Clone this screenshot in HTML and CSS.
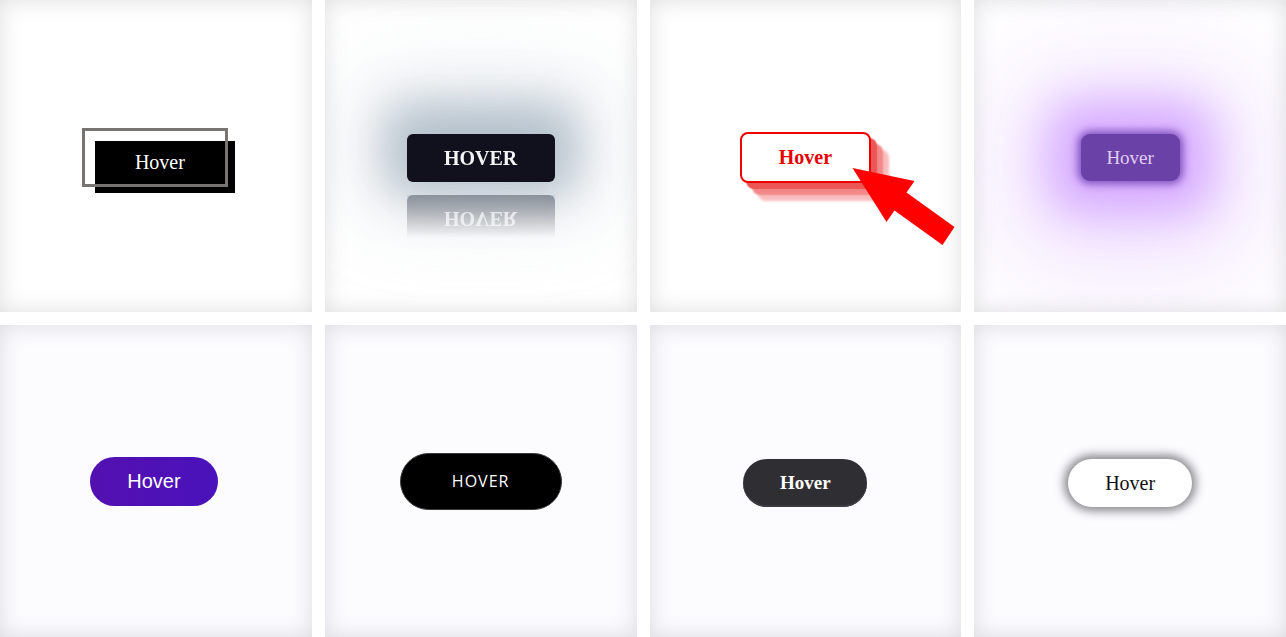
FILE: index.html
```html
<!DOCTYPE html>
<html lang="en">
<head>
<meta charset="utf-8">
<title>Hover buttons</title>
<link rel="stylesheet" href="styles.css">
</head>
<body>
<main class="grid">
  <div class="card">
    <button class="btn b1"><span class="b1-text">Hover</span></button>
  </div>
  <div class="card">
    <button class="btn b2">HOVER</button>
  </div>
  <div class="card">
    <button class="btn b3">Hover</button>
    <svg class="pointer" viewBox="0 0 311.75 312" aria-hidden="true">
      <polygon points="202.5,168 264.5,181 256.5,192.5 304.5,227 292.5,245 244.5,210.5 236.5,222" fill="#ff0000"/>
    </svg>
  </div>
  <div class="card">
    <button class="btn b4">Hover</button>
  </div>
  <div class="card card-low">
    <button class="btn b5">Hover</button>
  </div>
  <div class="card card-low">
    <button class="btn b6">HOVER</button>
  </div>
  <div class="card card-low">
    <button class="btn b7">Hover</button>
  </div>
  <div class="card card-low">
    <button class="btn b8">Hover</button>
  </div>
</main>
</body>
</html>
```
FILE: styles.css
```css
*, *::before, *::after { box-sizing: border-box; }

html, body {
  margin: 0;
  padding: 0;
  background: #ffffff;
}

.grid {
  display: grid;
  grid-template-columns: repeat(4, 1fr);
  grid-template-rows: 312px 312px;
  gap: 13px;
  width: 1286px;
  height: 637px;
}

.card {
  position: relative;
  display: flex;
  align-items: center;
  justify-content: center;
  background: #ffffff;
  box-shadow: inset 0 0 22px rgba(60, 60, 70, 0.17);
  overflow: hidden;
}

.card-low {
  background: #fcfbfe;
}

.btn {
  margin: 0;
  padding: 0;
  border: none;
  outline: none;
  font-family: "Liberation Serif", "Times New Roman", serif;
  cursor: pointer;
  display: flex;
  align-items: center;
  justify-content: center;
}

/* 1: offset outline */
.b1 {
  position: relative;
  width: 140px;
  height: 52px;
  margin: 12px 0 0 8px;
  background: transparent;
  color: #ffffff;
  font-size: 20px;
}
.b1::before {
  content: "";
  position: absolute;
  left: 5px;
  top: 5px;
  width: 140px;
  height: 52px;
  background: #000000;
}
.b1::after {
  content: "";
  position: absolute;
  left: -8px;
  top: -8px;
  width: 146px;
  height: 59px;
  border: 3px solid #777471;
}
.b1-text {
  position: relative;
  z-index: 1;
}

/* 2: reflection + glow */
.b2 {
  width: 148px;
  height: 48px;
  margin-top: 4px;
  border-radius: 6px;
  background: #10111c;
  color: #f4f4f4;
  font-size: 20px;
  font-weight: bold;
  box-shadow: 0 -8px 45px 22px rgba(135, 155, 172, 0.55), 0 -12px 85px 40px rgba(175, 190, 202, 0.3);
  -webkit-box-reflect: below 13px linear-gradient(transparent 10%, rgba(0, 0, 0, 0.5));
}

/* 3: 3d red */
.b3 {
  width: 131px;
  height: 51px;
  margin-top: 3px;
  border: 2px solid #ee0000;
  border-radius: 8px;
  background: #ffffff;
  color: #e60000;
  font-size: 20px;
  font-weight: bold;
  box-shadow: 6px 6px 1px #ec5656, 12px 12px 2px #f28888, 18px 18px 3px #f8bcbc;
}

.pointer {
  position: absolute;
  left: 0;
  top: 0;
  width: 100%;
  height: 100%;
  pointer-events: none;
}

/* 4: purple neon */
.b4 {
  width: 99px;
  height: 47px;
  margin-top: 3px;
  border-radius: 9px;
  background: #6a41a6;
  color: #e2cdf6;
  font-size: 19px;
  box-shadow: 0 0 8px 3px #7d4fbe, 0 0 45px 32px rgba(200, 140, 255, 0.65), 0 12px 110px 70px rgba(215, 170, 255, 0.38);
}

/* 5: purple pill */
.b5 {
  width: 128px;
  height: 49px;
  margin-right: 4px;
  border-radius: 25px;
  background: linear-gradient(90deg, #5310b0, #4a12bb);
  color: #ffffff;
  font-family: "Liberation Sans", Arial, sans-serif;
  font-size: 20px;
}

/* 6: black pill */
.b6 {
  width: 162px;
  height: 57px;
  border-radius: 29px;
  background: #000000;
  border: 1px solid #3a3a3a;
  color: #ffffff;
  font-family: "Open Sans", sans-serif;
  font-size: 16px;
  letter-spacing: 1px;
}

/* 7: dark pill */
.b7 {
  width: 124px;
  height: 48px;
  margin-top: 4px;
  border-radius: 24px;
  background: #2f2e33;
  color: #ffffff;
  font-size: 19px;
  font-weight: bold;
  box-shadow: inset 0 -2px 0 #3c3b40;
}

/* 8: white pill with dark halo */
.b8 {
  width: 124px;
  height: 48px;
  margin-top: 4px;
  border-radius: 24px;
  background: #ffffff;
  color: #111111;
  font-size: 20px;
  box-shadow: 0 0 10px 4px rgba(40, 40, 45, 0.55);
}
```
